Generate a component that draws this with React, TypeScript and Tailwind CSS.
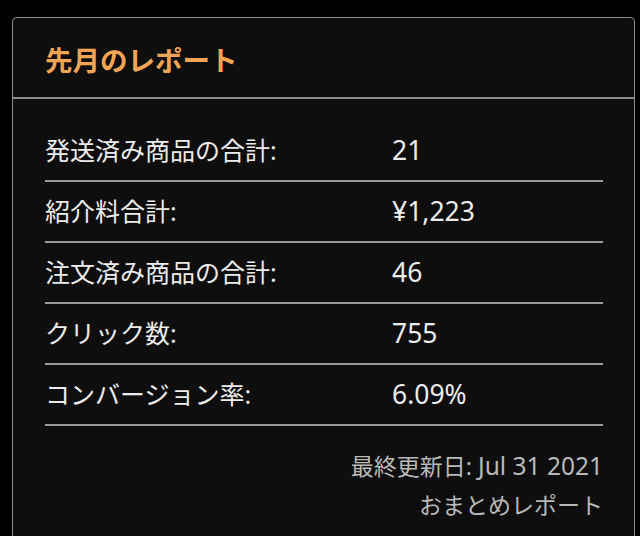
const rows = [
  { label: "発送済み商品の合計:", value: "21" },
  { label: "紹介料合計:", value: "¥1,223" },
  { label: "注文済み商品の合計:", value: "46" },
  { label: "クリック数:", value: "755" },
  { label: "コンバージョン率:", value: "6.09%" },
];

const App = () => {
  return (
    <div
      className="h-[536px] overflow-hidden bg-black pt-[17px] pl-3 pr-[5px]"
      style={{ fontFamily: '"Noto Sans", "Noto Sans CJK JP", sans-serif' }}
    >
      <div className="min-h-[540px] rounded-t-[5px] border border-b-0 border-[#8c8c8c] bg-[#0e0e0e]">
        {/* header */}
        <div className="flex h-[81px] items-center border-b-2 border-[#8c8c8c] px-8 pt-[6px]">
          <h2 className="text-[27.5px] font-bold text-[#f2a455]">先月のレポート</h2>
        </div>
        {/* stats */}
        <div className="pl-8 pr-[31px] pt-[22px]">
          {rows.map((r) => (
            <div
              key={r.label}
              className="flex h-[61px] items-center border-b-2 border-[#9a9a9a] text-[25px] text-[#ececec]"
            >
              <span className="w-[347px]">{r.label}</span>
              <span className="text-[26.5px]">{r.value}</span>
            </div>
          ))}
          <div className="pt-[20px] text-right text-[23px] leading-[39px] text-[#b9b9b9]">
            <p>
              最終更新日: <span className="text-[24.5px]">Jul 31 2021</span>
            </p>
            <p>おまとめレポート</p>
          </div>
        </div>
      </div>
    </div>
  );
};

export default App;
